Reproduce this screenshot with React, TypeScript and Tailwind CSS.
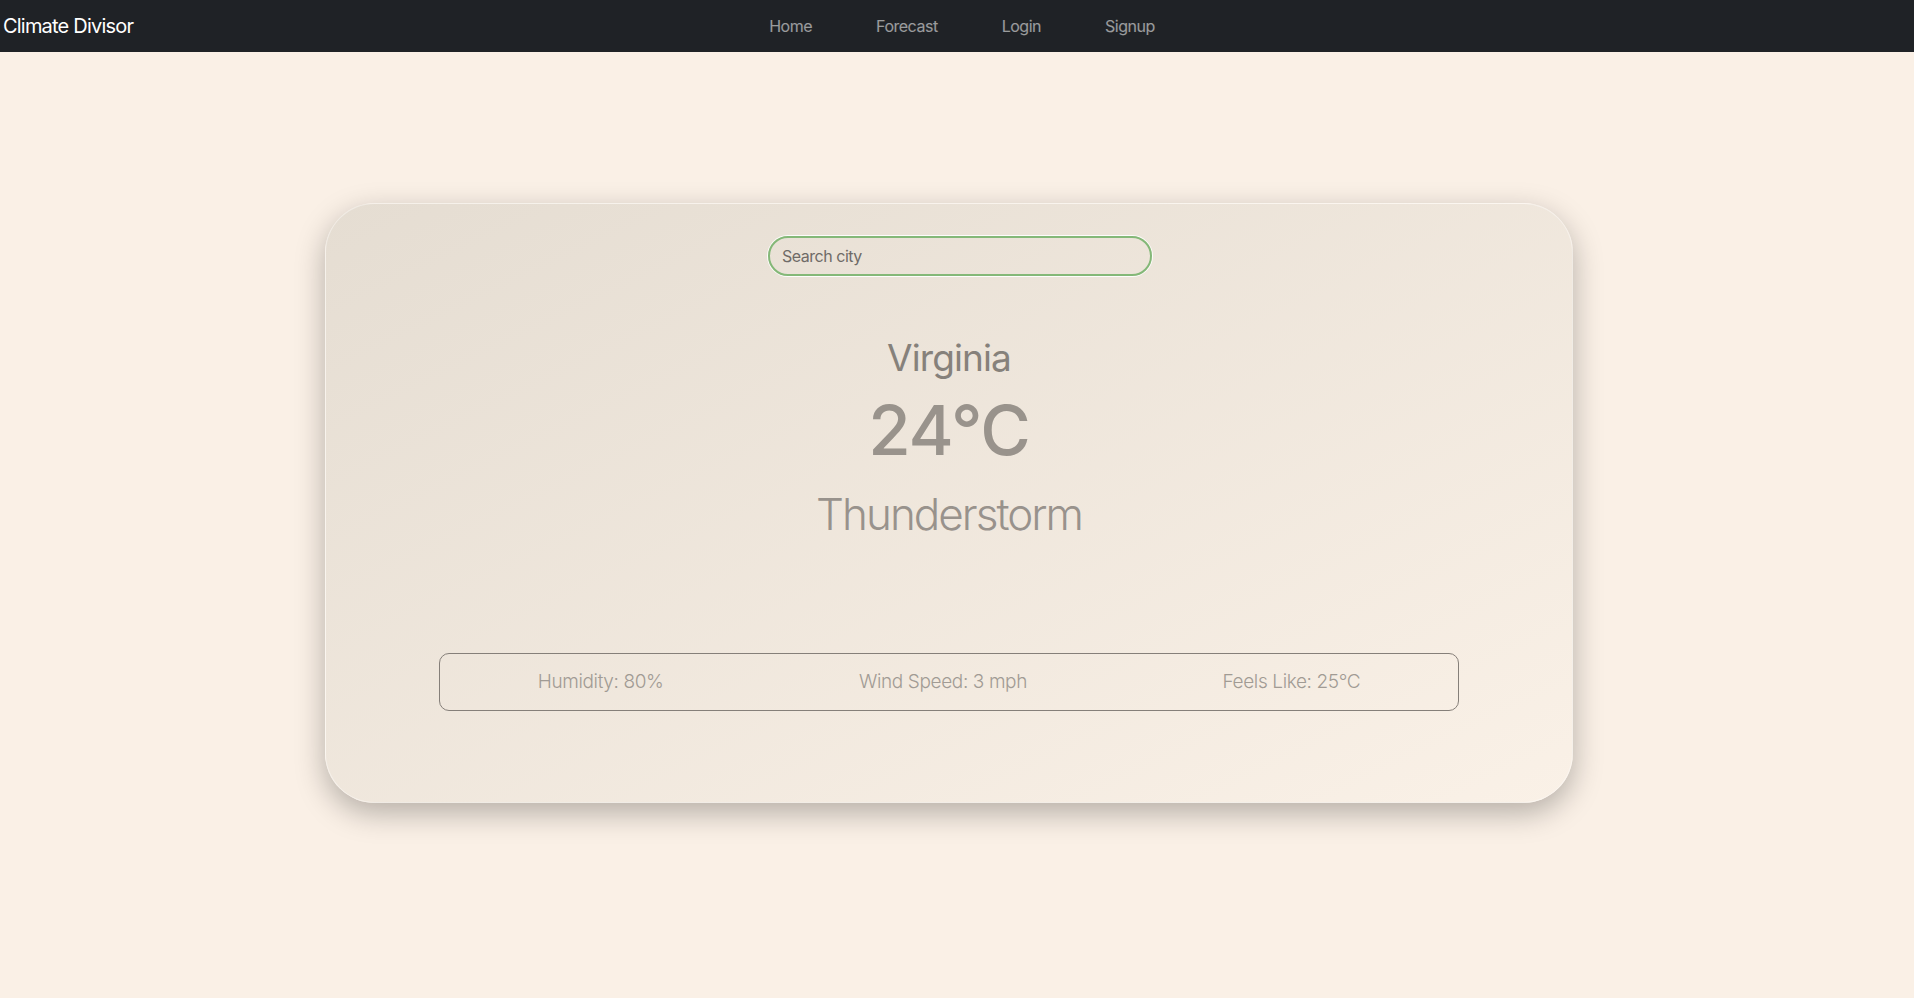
import { useState } from 'react'

const navLinks = ['Home', 'Forecast', 'Login', 'Signup']

export default function App() {
  const [city, setCity] = useState('')

  return (
    <div className="min-h-[998px] bg-[#faf0e6] font-['Inter','Liberation_Sans',sans-serif]">
      <nav className="flex h-[52px] items-center bg-[#1f2226]">
        <a className="pl-[3px] text-[20px] leading-[30px] tracking-[-0.04em] text-white">Climate Divisor</a>
        <ul className="ml-[604px] flex">
          {navLinks.map((link) => (
            <li key={link}>
              <a className="block px-8 text-[16px] leading-[24px] tracking-[-0.03em] text-white/55">{link}</a>
            </li>
          ))}
        </ul>
      </nav>

      <main className="pt-[151px]">
        <WeatherCard city={city} onCityChange={setCity} />
      </main>
    </div>
  )
}

function WeatherCard({
  city,
  onCityChange,
}: {
  city: string
  onCityChange: (value: string) => void
}) {
  return (
    <section className="ml-[325px] flex h-[600px] w-[1248px] flex-col items-center rounded-[50px] border border-white/40 bg-linear-to-br from-[#e5ddd2] to-[#faf1e7] shadow-[0_10px_30px_rgba(0,0,0,0.28)]">
      <input
        value={city}
        onChange={(e) => onCityChange(e.target.value)}
        placeholder="Search city"
        className="ml-[22px] mt-[32px] h-[40px] w-[384px] rounded-full border-2 border-[#84b878] bg-transparent px-[12px] text-[16px] tracking-[-0.03em] text-[#555] placeholder:text-[#6f6b67] outline-none ring-1 ring-white/90"
      />

      <h2 className="mt-[60px] text-[37px] leading-[44px] font-normal tracking-[-0.024em] text-[#86817b]">Virginia</h2>
      <p className="mt-[10px] text-[69px] leading-[80px] font-medium tracking-[-0.018em] text-[#99938c]">24°C</p>
      <p className="mt-[18px] text-[44px] leading-[52px] font-light tracking-[-0.045em] text-[#98928c]">Thunderstorm</p>

      <div className="mt-[113px] flex h-[58px] w-[1020px] items-center justify-around rounded-[10px] border border-[#857f79] text-[19px] font-light tracking-[-0.02em] text-[#a19b94]">
        <span>Humidity: 80%</span>
        <span>Wind Speed: 3 mph</span>
        <span>Feels Like: 25°C</span>
      </div>
    </section>
  )
}
